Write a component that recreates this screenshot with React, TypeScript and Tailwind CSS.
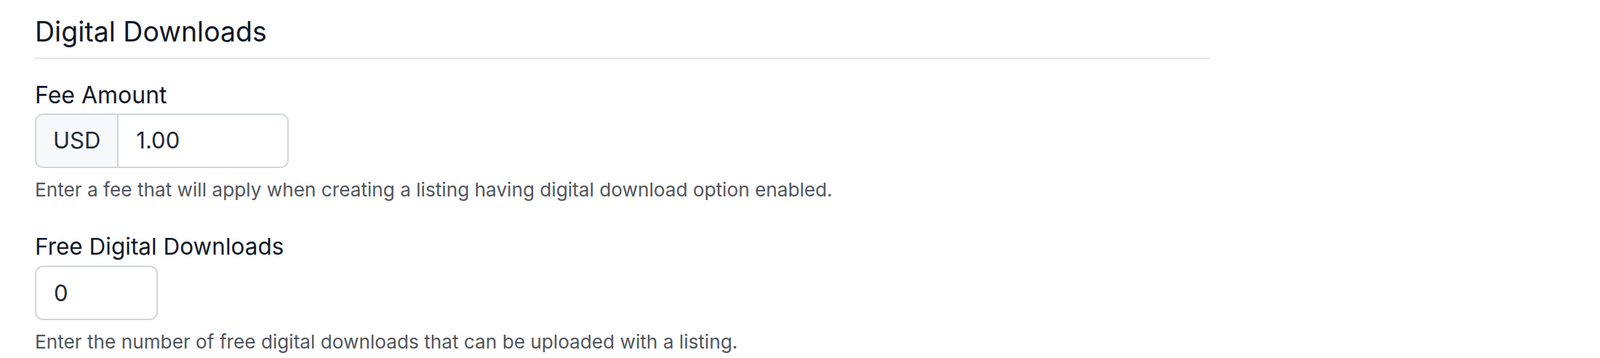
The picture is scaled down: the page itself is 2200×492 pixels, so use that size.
import React from 'react';

const App: React.FC = () => {
  return (
    <div className="min-h-screen bg-white font-['Inter',sans-serif] text-[#111827]">
      <div className="w-[1616px] ml-[48px] pt-[21px]">
        <h2 className="text-[37.5px] leading-[46px] font-normal pb-[12px] border-b-2 border-[#e5e7eb]">
          Digital Downloads
        </h2>

        <div className="mt-[30px]">
          <label className="block text-[32px] leading-[40px]">Fee Amount</label>
          <div className="mt-[5px] flex w-[349px] h-[75px] rounded-[11px] border-2 border-[#d1d5db] overflow-hidden">
            <span className="flex items-center px-[23px] bg-[#f7f8fa] border-r-2 border-[#d1d5db] text-[31px] text-[#1f2937]">
              USD
            </span>
            <input
              readOnly
              value="1.00"
              className="flex-1 min-w-0 px-[24px] text-[31px] text-[#1f2937] outline-none bg-white"
            />
          </div>
          <p className="mt-[12px] text-[26.2px] leading-[36px] text-[#52565c]">
            Enter a fee that will apply when creating a listing having digital download option enabled.
          </p>
        </div>

        <div className="mt-[40px]">
          <label className="block text-[31.5px] leading-[40px]">Free Digital Downloads</label>
          <input
            readOnly
            value="0"
            className="mt-[6px] block w-[169px] h-[75px] rounded-[11px] border-2 border-[#d1d5db] px-[24px] text-[31px] text-[#1f2937] outline-none"
          />
          <p className="mt-[12px] text-[26.2px] leading-[36px] text-[#52565c]">
            Enter the number of free digital downloads that can be uploaded with a listing.
          </p>
        </div>
      </div>
    </div>
  );
};

export default App;
